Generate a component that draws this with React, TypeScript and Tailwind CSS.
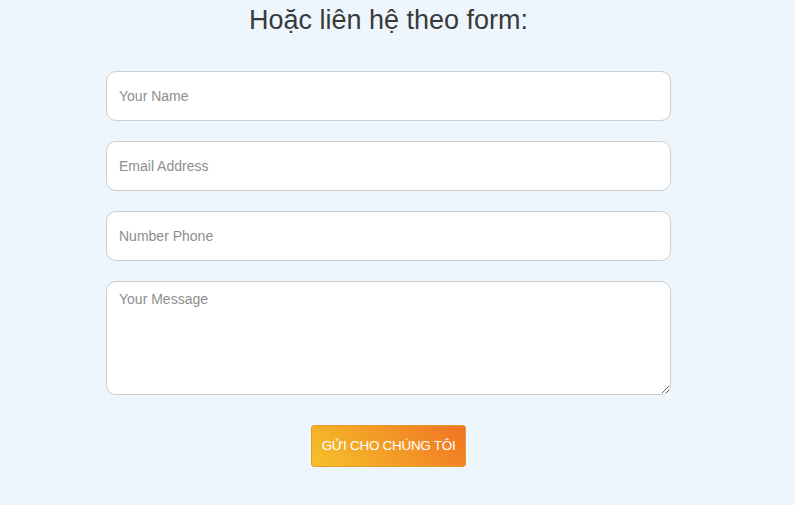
import { useState } from 'react';

export default function App() {
  const [name, setName] = useState('');
  const [email, setEmail] = useState('');
  const [phone, setPhone] = useState('');
  const [message, setMessage] = useState('');

  const inputCls =
    'w-full h-[50px] border border-[#cfcfcf] rounded-[10px] bg-white px-3 text-[14px] text-[#333] placeholder:text-[#8e8e8e] outline-none';

  return (
    <div className="min-h-[505px] w-full bg-[#eef6fd] font-['Liberation_Sans',Arial,sans-serif]">
      <div className="ml-[106px] w-[565px] flex flex-col">
        <h2 className="text-[27px] leading-[38px] text-[#3a3a3a] text-center pt-[1px]">Hoặc liên hệ theo form:</h2>
        <form className="flex flex-col gap-5 mt-[32px]" onSubmit={(e) => e.preventDefault()}>
          <input className={inputCls} placeholder="Your Name" value={name} onChange={(e) => setName(e.target.value)} />
          <input className={inputCls} placeholder="Email Address" value={email} onChange={(e) => setEmail(e.target.value)} />
          <input className={inputCls} placeholder="Number Phone" value={phone} onChange={(e) => setPhone(e.target.value)} />
          <textarea
            className="w-full h-[114px] border border-[#cfcfcf] rounded-[10px] bg-white px-3 py-[7px] text-[14px] text-[#333] placeholder:text-[#8e8e8e] outline-none"
            placeholder="Your Message"
            value={message}
            onChange={(e) => setMessage(e.target.value)}
          />
          <div className="flex justify-center mt-[10px]">
            <button
              type="submit"
              className="w-[155px] h-[42px] rounded-[3px] text-white text-[13.5px] tracking-[-0.3px] bg-[linear-gradient(45deg,#f6c22b,#f07323)] border border-[#e89a2a]"
            >
              GỬI CHO CHÚNG TÔI
            </button>
          </div>
        </form>
      </div>
    </div>
  );
}
